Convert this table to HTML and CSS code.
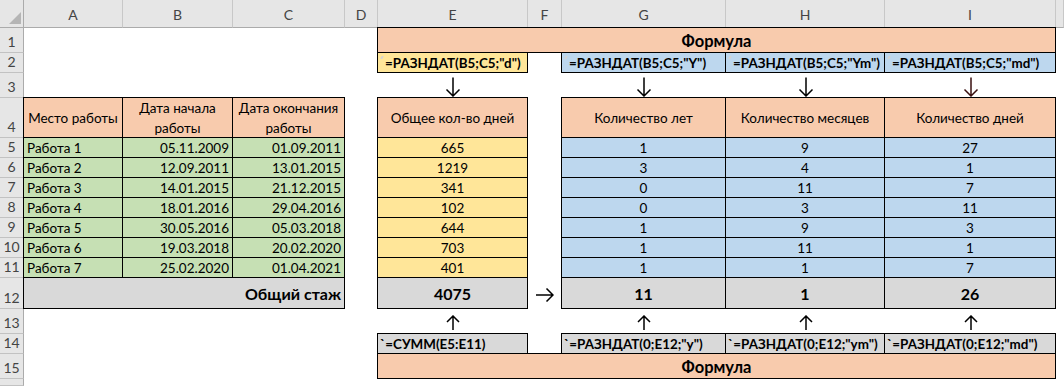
FILE: index.html
```html
<!DOCTYPE html>
<html lang="ru">
<head>
<meta charset="utf-8">
<title>РАЗНДАТ</title>
<link rel="stylesheet" href="styles.css">
</head>
<body>
<div class="sheet">
  <!-- column headers -->
  <div class="corner"></div>
  <div class="ch">A</div><div class="ch">B</div><div class="ch">C</div><div class="ch">D</div>
  <div class="ch">E</div><div class="ch">F</div><div class="ch">G</div><div class="ch">H</div>
  <div class="ch">I</div><div class="ch"></div>

  <!-- row 1 -->
  <div class="rh">1</div><div class="s4"></div>
  <div class="cell bd peach tc title s5">Формула</div><div></div>

  <!-- row 2 -->
  <div class="rh">2</div><div class="s4"></div>
  <div class="cell bd yellow f"><span class="tick"></span>=РАЗНДАТ(B5;C5;"d")</div><div></div>
  <div class="cell bd blue f"><span class="tick"></span>=РАЗНДАТ(B5;C5;"Y")</div>
  <div class="cell bd blue f"><span class="tick"></span>=РАЗНДАТ(B5;C5;"Ym")</div>
  <div class="cell bd blue f"><span class="tick"></span>=РАЗНДАТ(B5;C5;"md")</div><div></div>

  <!-- row 3 -->
  <div class="rh">3</div><div class="s4"></div>
  <div class="arrow down"><svg width="16" height="20" viewBox="0 0 16 20"><path d="M8 0.5V19 M1.5 12.5L8 19L14.5 12.5"/></svg></div><div></div>
  <div class="arrow down"><svg width="16" height="20" viewBox="0 0 16 20"><path d="M8 0.5V19 M1.5 12.5L8 19L14.5 12.5"/></svg></div>
  <div class="arrow down"><svg width="16" height="20" viewBox="0 0 16 20"><path d="M8 0.5V19 M1.5 12.5L8 19L14.5 12.5"/></svg></div>
  <div class="arrow down dark"><svg width="16" height="20" viewBox="0 0 16 20"><path d="M8 0.5V19 M1.5 12.5L8 19L14.5 12.5"/></svg></div><div></div>

  <!-- row 4 -->
  <div class="rh">4</div>
  <div class="cell bd peach tc">Место работы</div>
  <div class="cell bd peach tc wrap">Дата начала работы</div>
  <div class="cell bd peach tc wrap">Дата окончания работы</div>
  <div></div>
  <div class="cell bd peach tc">Общее кол-во дней</div><div></div>
  <div class="cell bd peach tc">Количество лет</div>
  <div class="cell bd peach tc">Количество месяцев</div>
  <div class="cell bd peach tc">Количество дней</div><div></div>

  <!-- rows 5-11 -->
  <div class="rh">5</div>
  <div class="cell bd green">Работа 1</div><div class="cell bd green tr">05.11.2009</div><div class="cell bd green tr">01.09.2011</div><div></div>
  <div class="cell bd yellow tc">665</div><div></div>
  <div class="cell bd blue tc">1</div><div class="cell bd blue tc">9</div><div class="cell bd blue tc">27</div><div></div>

  <div class="rh">6</div>
  <div class="cell bd green">Работа 2</div><div class="cell bd green tr">12.09.2011</div><div class="cell bd green tr">13.01.2015</div><div></div>
  <div class="cell bd yellow tc">1219</div><div></div>
  <div class="cell bd blue tc">3</div><div class="cell bd blue tc">4</div><div class="cell bd blue tc">1</div><div></div>

  <div class="rh">7</div>
  <div class="cell bd green">Работа 3</div><div class="cell bd green tr">14.01.2015</div><div class="cell bd green tr">21.12.2015</div><div></div>
  <div class="cell bd yellow tc">341</div><div></div>
  <div class="cell bd blue tc">0</div><div class="cell bd blue tc">11</div><div class="cell bd blue tc">7</div><div></div>

  <div class="rh">8</div>
  <div class="cell bd green">Работа 4</div><div class="cell bd green tr">18.01.2016</div><div class="cell bd green tr">29.04.2016</div><div></div>
  <div class="cell bd yellow tc">102</div><div></div>
  <div class="cell bd blue tc">0</div><div class="cell bd blue tc">3</div><div class="cell bd blue tc">11</div><div></div>

  <div class="rh">9</div>
  <div class="cell bd green">Работа 5</div><div class="cell bd green tr">30.05.2016</div><div class="cell bd green tr">05.03.2018</div><div></div>
  <div class="cell bd yellow tc">644</div><div></div>
  <div class="cell bd blue tc">1</div><div class="cell bd blue tc">9</div><div class="cell bd blue tc">3</div><div></div>

  <div class="rh">10</div>
  <div class="cell bd green">Работа 6</div><div class="cell bd green tr">19.03.2018</div><div class="cell bd green tr">20.02.2020</div><div></div>
  <div class="cell bd yellow tc">703</div><div></div>
  <div class="cell bd blue tc">1</div><div class="cell bd blue tc">11</div><div class="cell bd blue tc">1</div><div></div>

  <div class="rh">11</div>
  <div class="cell bd green">Работа 7</div><div class="cell bd green tr">25.02.2020</div><div class="cell bd green tr">01.04.2021</div><div></div>
  <div class="cell bd yellow tc">401</div><div></div>
  <div class="cell bd blue tc">1</div><div class="cell bd blue tc">1</div><div class="cell bd blue tc">7</div><div></div>

  <!-- row 12 -->
  <div class="rh">12</div>
  <div class="cell bd gray tr big s3">Общий стаж</div><div></div>
  <div class="cell bd gray tc big">4075</div>
  <div class="arrow right"><svg width="18" height="14" viewBox="0 0 18 14"><path d="M0 7H17 M10.5 0.5L17 7L10.5 13.5"/></svg></div>
  <div class="cell bd gray tc big">11</div><div class="cell bd gray tc big">1</div><div class="cell bd gray tc big">26</div><div></div>

  <!-- row 13 -->
  <div class="rh">13</div><div class="s4"></div>
  <div class="arrow up"><svg width="14" height="15" viewBox="0 0 14 15"><path d="M7 15V1 M1 7L7 1L13 7"/></svg></div><div></div>
  <div class="arrow up"><svg width="14" height="15" viewBox="0 0 14 15"><path d="M7 15V1 M1 7L7 1L13 7"/></svg></div>
  <div class="arrow up"><svg width="14" height="15" viewBox="0 0 14 15"><path d="M7 15V1 M1 7L7 1L13 7"/></svg></div>
  <div class="arrow up"><svg width="14" height="15" viewBox="0 0 14 15"><path d="M7 15V1 M1 7L7 1L13 7"/></svg></div><div></div>

  <!-- row 14 -->
  <div class="rh">14</div><div class="s4"></div>
  <div class="cell bd gray f">`=СУММ(E5:E11)</div><div></div>
  <div class="cell bd gray f">`=РАЗНДАТ(0;E12;"y")</div>
  <div class="cell bd gray f">`=РАЗНДАТ(0;E12;"ym")</div>
  <div class="cell bd gray f">`=РАЗНДАТ(0;E12;"md")</div><div></div>

  <!-- row 15 -->
  <div class="rh">15</div><div class="s4"></div>
  <div class="cell bd peach tc title s5">Формула</div><div></div>

  <!-- row 16 -->
  <div class="rh"></div><div class="s10"></div>
</div>
</body>
</html>
```

FILE: styles.css
```css
html, body {
  margin: 0;
  padding: 0;
  background: #ffffff;
}

body {
  font-family: Lato, "Liberation Sans", sans-serif;
  font-size: 13.5px;
  color: #000;
}

.sheet {
  display: grid;
  grid-template-columns: 24px 99px 110px 112px 33px 150px 34px 164px 159px 171px 8px;
  grid-template-rows: 28px 25px 20px 25px 40px repeat(7, 20px) 31px 25px 20px 25px 7px;
  width: 1064px;
  height: 386px;
  overflow: hidden;
}

.corner {
  position: relative;
  background: #e6e6e6;
  border-right: 1px solid #ababab;
  border-bottom: 1px solid #ababab;
}

.corner::after {
  content: "";
  position: absolute;
  right: 2px;
  bottom: 3px;
  width: 12px;
  height: 12px;
  background: #b5b5b5;
  clip-path: polygon(100% 0, 100% 100%, 0 100%);
}

.ch {
  background: #e6e6e6;
  border-right: 1px solid #c8c8c8;
  border-bottom: 1px solid #ababab;
  display: flex;
  align-items: center;
  justify-content: center;
  color: #444;
  font-size: 14px;
  padding-top: 2px;
}

.rh {
  background: #e6e6e6;
  border-right: 1px solid #ababab;
  border-bottom: 1px solid #c2c2c2;
  color: #444;
  font-size: 14px;
  line-height: 1;
  display: flex;
  align-items: flex-end;
  justify-content: center;
  padding-bottom: 3px;
  overflow: hidden;
}

.cell {
  display: flex;
  align-items: center;
  padding: 1px 3px 0;
  white-space: nowrap;
  overflow: hidden;
  min-width: 0;
}

.bd {
  border: 1px solid #000;
  margin: -1px 0 0 -1px;
}

.peach { background: #f8cbad; }
.green { background: #c6e0b4; }
.yellow { background: #ffe699; }
.blue { background: #bdd7ee; }
.gray { background: #d9d9d9; }

.tc { justify-content: center; text-align: center; }
.tr { justify-content: flex-end; }

.big { font-weight: 700; font-size: 16px; }

.title {
  font-weight: 700;
  font-size: 16.5px;
  padding-top: 2px;
}

.f {
  padding-left: 2px;
  font-weight: 700;
  font-size: 13.4px;
}

.tick {
  align-self: flex-start;
  width: 2px;
  height: 3px;
  margin: 2px 2px 0 1px;
  background: #d4d4d4;
  transform: skewX(-25deg);
  flex: none;
}

.wrap {
  white-space: normal;
  line-height: 20px;
}

.s3 { grid-column: span 3; }
.s4 { grid-column: span 4; }
.s5 { grid-column: span 5; }
.s10 { grid-column: span 10; }

.arrow {
  display: flex;
  justify-content: center;
}

.arrow svg path {
  fill: none;
  stroke: #000;
  stroke-width: 1.5;
}

.arrow.down { align-items: flex-end; padding-bottom: 1px; }
.arrow.up { align-items: center; padding-top: 2px; }
.arrow.right { align-items: center; padding-top: 3px; }
.arrow.dark svg path { stroke: #3a1010; }
```
